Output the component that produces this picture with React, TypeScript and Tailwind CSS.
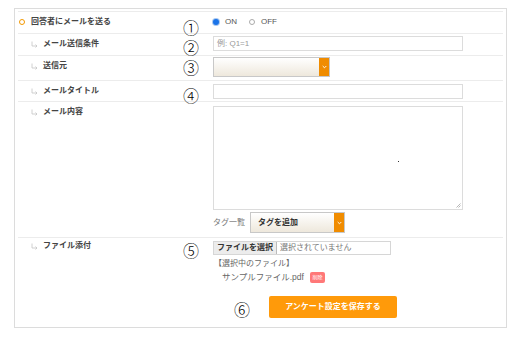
import React from 'react';

const font = "font-['Liberation_Sans','Noto_Sans_CJK_JP',sans-serif]";

function SubArrow() {
  return (
    <svg width="7" height="7" viewBox="0 0 7 7" className="mr-[5px] shrink-0">
      <path d="M1 0.5 V5 H6 M4.5 3.5 L6 5 L4.5 6.5" fill="none" stroke="#c4c4c4" strokeWidth="0.8" />
    </svg>
  );
}

function Label({ text, sub = true, pt = 'pt-[5px]' }: { text: string; sub?: boolean; pt?: string }) {
  return (
    <div className={`w-[195px] shrink-0 ${pt} flex items-center h-fit leading-[10px] text-[8px] font-bold text-[#444] ${sub ? 'pl-[13px]' : 'pl-[1px]'}`}>
      {sub ? (
        <SubArrow />
      ) : (
        <span className="w-[6px] h-[6px] rounded-full border-[1.5px] border-[#f39800] mr-[6px] shrink-0" />
      )}
      <span>{text}</span>
    </div>
  );
}

function OrangeSelect({ label, w, h }: { label: string; w: string; h: string }) {
  return (
    <div className={`flex ${w} ${h} border border-[#c8c8c8] bg-gradient-to-b from-white to-[#eee8dc]`}>
      <div className="flex-1 flex items-center pl-[7px] text-[8px] font-bold text-[#333]">{label}</div>
      <div className="w-[10px] bg-[#f08c00] flex items-center justify-center">
        <svg width="5" height="4" viewBox="0 0 5 4">
          <path d="M0.7 1 L2.5 2.8 L4.3 1" fill="none" stroke="white" strokeWidth="0.9" />
        </svg>
      </div>
    </div>
  );
}

// annotation marks drawn over the form
const marks = [
  { n: '①', left: 'left-[183px]', top: 'top-[20px]' },
  { n: '②', left: 'left-[183px]', top: 'top-[40px]' },
  { n: '③', left: 'left-[183px]', top: 'top-[60px]' },
  { n: '④', left: 'left-[183px]', top: 'top-[88px]' },
  { n: '⑤', left: 'left-[183px]', top: 'top-[243px]' },
  { n: '⑥', left: 'left-[234px]', top: 'top-[302px]' },
];

export default function App() {
  return (
    <div className={`relative w-[527px] h-[342px] bg-white overflow-hidden ${font}`}>
      <div className="ml-[14px] mt-[8px] w-[493px] h-[320px] border border-[#dcdcdc] px-[3px] pt-[2px]">
        <div className="border-t border-[#ececec]">
          {/* 回答者にメールを送る */}
          <div className="flex h-[22px] border-b border-[#ececec]">
            <Label text="回答者にメールを送る" sub={false} />
            <div className="pt-[5px] flex items-center h-fit leading-[10px] text-[8px] text-[#555]">
              <span className="w-[6px] h-[6px] rounded-full bg-[#1a73e8] ring-1 ring-[#a9c8f0] mr-[6px]" />
              <span className="mr-[12px]">ON</span>
              <span className="w-[6px] h-[6px] rounded-full border border-[#aaa] mr-[6px]" />
              <span>OFF</span>
            </div>
          </div>

          {/* メール送信条件 */}
          <div className="flex h-[22px] border-b border-[#ececec]">
            <Label text="メール送信条件" />
            <div className="mt-[2px] w-[250px] h-[15px] border border-[#dcdcdc] flex items-center pl-[3px] text-[8px] text-[#999]">
              例: Q1=1
            </div>
          </div>

          {/* 送信元 */}
          <div className="flex h-[25px] border-b border-[#ececec]">
            <Label text="送信元" />
            <div className="mt-[1px]">
              <OrangeSelect label="" w="w-[117px]" h="h-[20px]" />
            </div>
          </div>

          {/* メールタイトル */}
          <div className="flex h-[21px] border-b border-[#ececec]">
            <Label text="メールタイトル" />
            <div className="mt-[3px] w-[250px] h-[15px] border border-[#dcdcdc]" />
          </div>

          {/* メール内容 */}
          <div className="flex h-[136px] border-b border-[#ececec]">
            <Label text="メール内容" />
            <div className="mt-[4px]">
              <div className="relative w-[250px] h-[104px] border border-[#dcdcdc]">
                <span className="absolute left-[184px] top-[54px] w-[1px] h-[1px] bg-[#333]" />
                <svg width="5" height="5" viewBox="0 0 5 5" className="absolute right-[1px] bottom-[1px]">
                  <path d="M4.5 0.5 L0.5 4.5 M4.5 2.5 L2.5 4.5" stroke="#999" strokeWidth="0.7" />
                </svg>
              </div>
              <div className="mt-[2px] flex items-center">
                <span className="text-[8px] text-[#777] mr-[5px]">タグ一覧</span>
                <OrangeSelect label="タグを追加" w="w-[95px]" h="h-[21px]" />
              </div>
            </div>
          </div>

          {/* ファイル添付 */}
          <div className="flex h-[56px]">
            <Label text="ファイル添付" pt="pt-[3px]" />
            <div className="mt-[3px] text-[8px] text-[#666]">
              <div className="flex w-[178px] h-[14px] border border-[#d6d6d6]">
                <div className="px-[3px] flex items-center bg-[#ececec] border-r border-[#bbb] font-bold text-[#333]">ファイルを選択</div>
                <div className="pl-[3px] flex items-center text-[#777]">選択されていません</div>
              </div>
              <div className="mt-[3px] ml-[1px] leading-[12px]">【選択中のファイル】</div>
              <div className="mt-[1px] ml-[9px] flex items-center leading-[12px]">
                <span className="text-[8.5px]">サンプルファイル.pdf</span>
                <span className="ml-[6px] w-[15px] h-[11px] rounded-[2px] bg-[#ff7878] text-white text-[5px] flex items-center justify-center">削除</span>
              </div>
            </div>
          </div>

          <div className="flex pt-[2px]">
            <div className="ml-[251px] w-[128px] h-[22px] rounded-[2px] bg-[#ff9a0a] text-white text-[8px] font-bold flex items-center justify-center">
              アンケート設定を保存する
            </div>
          </div>
        </div>
      </div>

      {marks.map((m) => (
        <span
          key={m.n}
          className={`absolute ${m.left} ${m.top} text-[16px] leading-[14px] font-light text-black font-['Noto_Sans_CJK_JP',sans-serif]`}
        >
          {m.n}
        </span>
      ))}
    </div>
  );
}
